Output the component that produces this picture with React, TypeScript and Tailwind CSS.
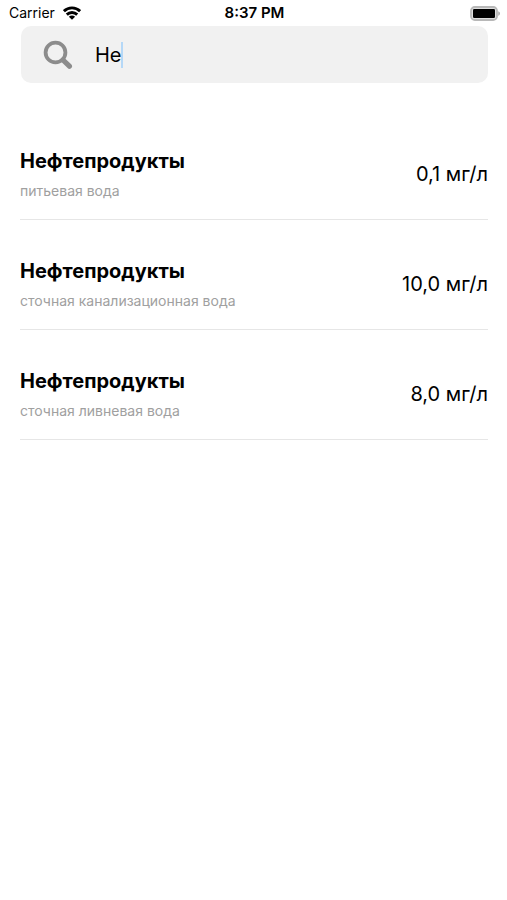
import React, { useState } from "react";

interface Substance {
  id: number;
  name: string;
  medium: string;
  limit: string;
}

const substances: Substance[] = [
  { id: 1, name: "Нефтепродукты", medium: "питьевая вода", limit: "0,1 мг/л" },
  { id: 2, name: "Нефтепродукты", medium: "сточная канализационная вода", limit: "10,0 мг/л" },
  { id: 3, name: "Нефтепродукты", medium: "сточная ливневая вода", limit: "8,0 мг/л" },
];

const WifiIcon = () => (
  <svg width="18" height="14" viewBox="0 0 18 14" fill="none" stroke="black" strokeWidth="2.9" aria-hidden="true">
    <path d="M0.9 5.2a11.6 11.6 0 0 1 16.2 0" />
    <path d="M3.8 8.6a7.4 7.4 0 0 1 10.4 0" />
    <path d="M9 13.8 5.9 10.8a4.4 4.4 0 0 1 6.2 0Z" fill="black" stroke="none" />
  </svg>
);

const BatteryIcon = () => (
  <svg width="30" height="15" viewBox="0 0 30 15" aria-hidden="true">
    <rect x="1" y="1" width="26" height="13" rx="3.8" fill="#dedede" stroke="#b8b8b8" strokeWidth="1.8" />
    <rect x="3" y="3" width="22" height="9" rx="1.2" fill="black" />
    <path d="M28.3 5.2c1 .4 1.6 1.3 1.6 2.3s-.6 1.9-1.6 2.3Z" fill="#a3a3a3" />
  </svg>
);

const SearchIcon = () => (
  <svg width="30" height="30" viewBox="0 0 30 30" fill="none" stroke="#8c8c8c" aria-hidden="true">
    <circle cx="12.5" cy="12.5" r="9.9" strokeWidth="3.8" />
    <path d="M20 20l6.4 6.2" strokeWidth="5.2" strokeLinecap="round" />
  </svg>
);

const StatusBar = () => (
  <header className="grid h-[26px] grid-cols-3 items-center pl-[9px] pr-[7px] text-sm leading-4">
    <div className="flex items-center gap-2">
      <span>Carrier</span>
      <WifiIcon />
    </div>
    <span className="text-center text-[15px] leading-4 font-semibold">8:37 PM</span>
    <div className="flex justify-end">
      <BatteryIcon />
    </div>
  </header>
);

const App = () => {
  const [query, setQuery] = useState("Не");

  const found = substances.filter((item) => item.name.toLowerCase().startsWith(query.toLowerCase()));

  return (
    <div className="min-h-screen bg-white font-['Inter','Liberation_Sans',sans-serif] text-black">
      <StatusBar />

      <main className="pl-5 pr-[19px]">
        {/* Search field */}
        <label className="ml-px flex h-[57px] cursor-text items-center rounded-[10px] bg-[#f1f1f1] pl-[22px] pr-4">
          <SearchIcon />
          <input
            type="text"
            aria-label="Поиск"
            value={query}
            onChange={(e) => setQuery(e.target.value)}
            className="ml-[22px] field-sizing-content max-w-full bg-transparent text-xl caret-transparent outline-none"
          />
          <span className="-ml-px h-[26px] w-[2px] bg-[#b5d8f7]" />
        </label>

        {/* Results */}
        <ul className="mt-[27px]">
          {found.map((item) => (
            <li key={item.id} className="flex h-[110px] items-end justify-between border-b border-[#e6e6e6] pb-4">
              <div>
                <h2 className="text-xl leading-7 font-bold">{item.name}</h2>
                <p className="mt-1 text-sm leading-6 text-[#a0a0a0]">{item.medium}</p>
              </div>
              <span className="pb-[15px] text-xl leading-7">{item.limit}</span>
            </li>
          ))}
        </ul>
      </main>
    </div>
  );
};

export default App;
